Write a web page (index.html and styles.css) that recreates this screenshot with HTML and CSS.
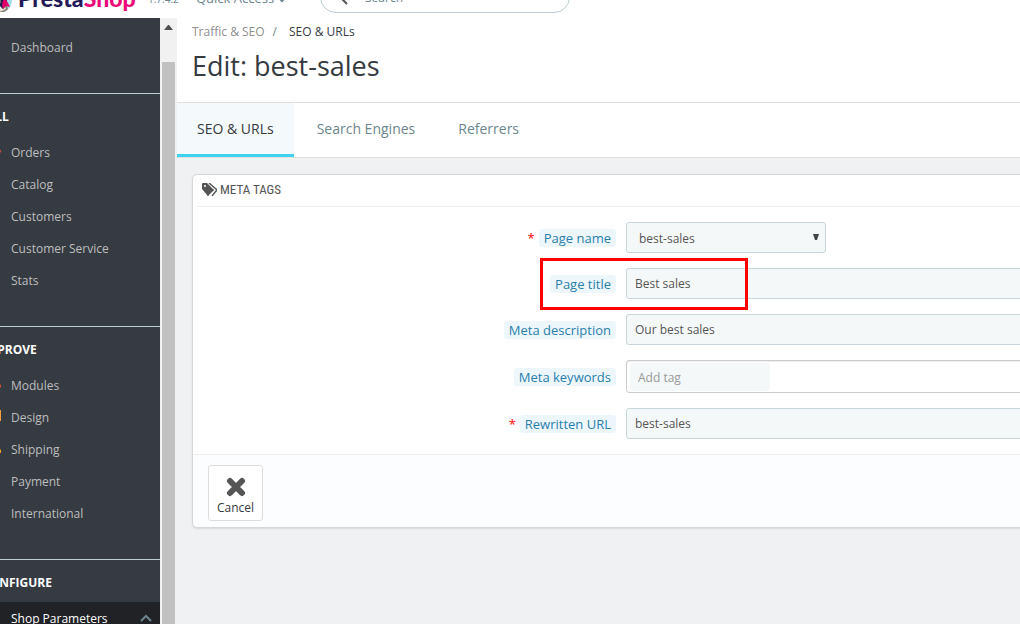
FILE: index.html
```html
<!DOCTYPE html>
<html lang="en">
<head>
    <meta charset="UTF-8">
    <meta name="viewport" content="width=device-width, initial-scale=1.0">
    <title>SEO &amp; URLs - PrestaShop</title>
    <link rel="stylesheet" href="styles.css">
</head>
<body>
    <div class="page">
        <header class="header">
            <a href="#" class="logo">
                <svg class="logo-icon" width="28" height="28" viewBox="0 0 28 28">
                    <circle cx="13" cy="16" r="13" fill="#a4dbe8"/>
                    <path d="M4 24c3-6 6-9 10-9s7 4 8 10c-4 5-13 5-18-1z" fill="#8d8478"/>
                    <path d="M9 25c3-4 7-5 11-1-3 4-8 4-11 1z" fill="#e9e2d6"/>
                    <path d="M14 12l7 3-1 6-3 4-4-4 2-3z" fill="#251b5b"/>
                    <path d="M18 12l4 7 2 4-4-1-3 3-1-4z" fill="#df0067"/>
                </svg>
                <span class="logo-presta">Presta</span><span class="logo-shop">Shop</span>
            </a>
            <span class="version">1.7.4.2</span>
            <button class="quick-access">
                Quick Access
                <svg width="8" height="8" viewBox="0 0 8 8"><path d="M1 3l3 3 3-3" fill="none" stroke="#6c868e" stroke-width="2"/></svg>
            </button>
            <form class="search">
                <svg width="16" height="16" viewBox="0 0 16 16"><circle cx="6" cy="6" r="4" fill="none" stroke="#4e5457" stroke-width="2"/><path d="M8 9l6 6" stroke="#4e5457" stroke-width="2"/></svg>
                <input type="text" placeholder="Search" aria-label="Search">
            </form>
        </header>

        <div class="content">
            <nav class="sidebar">
                <ul class="menu">
                    <li><a href="#"><span class="icon"></span>Dashboard</a></li>
                </ul>

                <h2>SELL</h2>
                <ul class="menu">
                    <li><a href="#"><svg class="icon" viewBox="0 0 16 16"><path d="M0 6h16l-2 8H2zM3 6l3-5h1L5 6zM13 6l-3-5H9l2 5z" fill="#f0532d"/></svg>Orders</a></li>
                    <li><a href="#"><span class="icon"></span>Catalog</a></li>
                    <li><a href="#"><span class="icon"></span>Customers</a></li>
                    <li><a href="#"><span class="icon"></span>Customer Service</a></li>
                    <li><a href="#"><span class="icon"></span>Stats</a></li>
                </ul>

                <h2>IMPROVE</h2>
                <ul class="menu">
                    <li><a href="#"><svg class="icon" viewBox="0 0 16 16"><path d="M1 4h4V3a2 2 0 0 1 4 0v1h4v3h1a2 2 0 0 1 0 4h-1v4H1z" fill="#f0532d"/></svg>Modules</a></li>
                    <li><a href="#"><svg class="icon" viewBox="0 0 16 16"><path d="M1 1h15v11H1zM5 13h6v2H5z" fill="#f39d3e"/></svg>Design</a></li>
                    <li><a href="#"><svg class="icon" viewBox="0 0 16 16"><path d="M0 3h10v3h3l3 3v3H0z" fill="#f39d1e"/></svg>Shipping</a></li>
                    <li><a href="#"><span class="icon"></span>Payment</a></li>
                    <li><a href="#"><span class="icon"></span>International</a></li>
                </ul>

                <h2>CONFIGURE</h2>
                <ul class="menu">
                    <li class="active"><a href="#"><span class="icon"></span>Shop Parameters
                        <svg class="chevron" width="12" height="8" viewBox="0 0 12 8"><path d="M1 7l5-5 5 5" fill="none" stroke="#6c868e" stroke-width="2"/></svg>
                    </a></li>
                </ul>
            </nav>

            <div class="scrollbar">
                <svg width="9" height="5" viewBox="0 0 9 5"><path d="M0 5h9L5 0H4z" fill="#505050"/></svg>
                <div class="thumb"></div>
            </div>

            <main class="main">
                <div class="page-head">
                    <div class="breadcrumb">
                        <a href="#">Traffic &amp; SEO</a>
                        <span class="separator">/</span>
                        <span>SEO &amp; URLs</span>
                    </div>
                    <h1>Edit: best-sales</h1>
                </div>
                <div class="tabs">
                    <a href="#" class="current">SEO &amp; URLs</a>
                    <a href="#">Search Engines</a>
                    <a href="#">Referrers</a>
                </div>

                <form class="panel">
                    <h3>
                        <svg width="15" height="13" viewBox="0 0 15 13">
                            <path d="M0 1a1 1 0 0 1 1-1h4l6 6a1 1 0 0 1 0 2l-4 4a1 1 0 0 1-2 0L0 6zM3 2a1 1 0 1 0 0 2 1 1 0 0 0 0-2z" fill="#555" fill-rule="evenodd"/>
                            <path d="M7 0l7 6a1 1 0 0 1 0 2l-4 5" fill="none" stroke="#555" stroke-width="1.4"/>
                        </svg>
                        META TAGS
                    </h3>
                    <div class="fields">
                        <div class="form-group">
                            <div class="label-col"><span class="required">*</span><label for="page-name">Page name</label></div>
                            <div class="select">
                                <select id="page-name">
                                    <option>best-sales</option>
                                </select>
                                <svg width="6" height="6" viewBox="0 0 6 6"><path d="M0 0h6L4 6H2z" fill="#444"/></svg>
                            </div>
                        </div>
                        <div class="form-group">
                            <div class="label-col"><label for="page-title">Page title</label></div>
                            <input type="text" id="page-title" value="Best sales">
                            <div class="highlight"></div>
                        </div>
                        <div class="form-group">
                            <div class="label-col"><label for="description">Meta description</label></div>
                            <input type="text" id="description" value="Our best sales">
                        </div>
                        <div class="form-group">
                            <div class="label-col"><label for="keywords">Meta keywords</label></div>
                            <div class="tags">
                                <input type="text" id="keywords" placeholder="Add tag">
                            </div>
                        </div>
                        <div class="form-group">
                            <div class="label-col"><span class="required">*</span><label for="url">Rewritten URL</label></div>
                            <input type="text" id="url" value="best-sales">
                        </div>
                    </div>
                    <div class="panel-footer">
                        <button type="button" class="cancel">
                            <svg width="20" height="20" viewBox="0 0 20 20"><path d="M4 4l12 12M16 4L4 16" stroke="#555" stroke-width="6" stroke-linecap="round"/></svg>
                            Cancel
                        </button>
                    </div>
                </form>
            </main>
        </div>
    </div>
</body>
</html>
```
FILE: styles.css
```css
* {
    box-sizing: border-box;
}
body {
    margin: 0;
    overflow: hidden;
    font-family: "Open Sans", sans-serif;
    font-size: 12px;
    color: #363a41;
    background-color: #eff1f2;
}
a {
    text-decoration: none;
}
button,
input,
select {
    font-family: inherit;
    font-size: 12px;
}

/* the window is scrolled: the top and both sides run past its edges */
.page {
    display: flex;
    flex-direction: column;
    height: calc(100vh + 22px);
    margin: -22px -40px 0 -50px;
}

/* Header */
.header {
    display: flex;
    align-items: center;
    flex: none;
    height: 40px;
    padding-left: 36px;
    background: white;
}
.logo {
    display: flex;
    align-items: center;
    width: 150px;
    font-family: Lato, sans-serif;
    font-size: 23px;
    font-weight: 900;
    line-height: 40px;
}
.logo-icon {
    margin-right: 4px;
}
.logo-presta {
    color: #251b5b;
}
.logo-shop {
    color: #ec0a78;
}
.version {
    width: 60px;
    padding: 2px 0 0 12px;
    font-size: 10px;
    color: #6c868e;
}
.quick-access {
    width: 124px;
    padding: 0;
    border: none;
    background: none;
    font-size: 13px;
    text-align: left;
    color: #6c868e;
}
.search {
    display: flex;
    align-items: center;
    width: 250px;
    height: 32px;
    padding: 0 12px;
    margin-bottom: 2px;
    border: 1px solid #bbcdd2;
    border-radius: 16px;
}
.search input {
    width: 180px;
    padding: 0 16px;
    border: none;
    background: none;
}
.search input::placeholder {
    color: #6c868e;
}

.content {
    display: flex;
    flex: 1;
    min-height: 0;
}

/* Sidebar */
.sidebar {
    flex: none;
    width: 210px;
    padding-top: 13px;
    overflow: hidden;
    background-color: #363a41;
}
.sidebar h2 {
    height: 43px;
    margin: 30px 0 0;
    padding-left: 32px;
    border-top: 1px solid #bbcdd2;
    font-size: 12px;
    font-weight: 700;
    line-height: 45px;
    color: white;
}
.menu {
    list-style: none;
    margin: 0;
    padding: 0;
}
.menu a {
    display: flex;
    align-items: center;
    height: 32px;
    padding: 0 8px 0 35px;
    font-size: 12px;
    color: #bebebe;
}
.menu .icon {
    width: 16px;
    height: 16px;
    margin-right: 10px;
}
.menu .active a {
    background-color: #202226;
    color: white;
}
.chevron {
    margin-left: auto;
}

.scrollbar {
    display: flex;
    flex: none;
    flex-direction: column;
    align-items: center;
    width: 17px;
    padding-top: 7px;
    background-color: #f1f1f1;
}
.thumb {
    flex: 1;
    width: 13px;
    margin-top: 32px;
    background-color: #c1c1c1;
}

/* Main */
.main {
    flex: 1;
    min-width: 0;
}
.page-head {
    height: 85px;
    padding: 5px 15px 0;
    border-bottom: 1px solid #dfdfdf;
    background: white;
}
.breadcrumb {
    display: flex;
    gap: 8px;
    line-height: 18px;
}
.breadcrumb a {
    color: #8f8f8f;
}
.separator {
    padding-right: 4px;
    color: #6c868e;
}
h1 {
    margin: 7px 0 0;
    font-size: 27px;
    font-weight: 400;
    line-height: 36px;
}
.tabs {
    display: flex;
    gap: 3px;
    height: 55px;
    border-bottom: 1px solid #dfdfdf;
    background: white;
}
.tabs a {
    padding: 0 20px;
    border-bottom: 3px solid transparent;
    font-size: 14px;
    line-height: 52px;
    color: #6c868e;
}
.tabs .current {
    border-bottom-color: #3ed2f0;
    background-color: #f4f9fb;
    color: #363a41;
}

.panel {
    margin: 16px 15px 0;
    border: 1px solid #d3d8db;
    border-radius: 5px;
    background: white;
    box-shadow: 0 1px 2px rgba(0,0,0,0.1);
}
.panel h3 {
    display: flex;
    align-items: center;
    gap: 3px;
    height: 32px;
    margin: 0 4px;
    padding: 0 0 2px 5px;
    border-bottom: 1px solid #eee;
    font-family: "Ubuntu Condensed", "Liberation Sans Narrow", "Roboto Condensed", sans-serif;
    font-size: 13px;
    font-weight: 400;
    color: #555;
}
.fields {
    display: flex;
    flex-direction: column;
    gap: 15px;
    padding: 15px;
}
.form-group {
    position: relative;
    display: flex;
    align-items: center;
    gap: 10px;
}
.label-col {
    display: flex;
    justify-content: flex-end;
    flex: none;
    gap: 4px;
    width: 408px;
    font-size: 13px;
    line-height: 18px;
}
.label-col label {
    padding: 0 5px;
    border-radius: 3px;
    background-color: #edf7fb;
    color: #2a7fac;
}
.required {
    color: red;
}
.form-group > input,
.select select {
    height: 31px;
    padding: 0 8px;
    border: 1px solid #c7d6db;
    border-radius: 3px;
    background-color: #f5f8f9;
    color: #555;
}
.form-group > input {
    flex: 1;
    min-width: 0;
}
.select {
    position: relative;
    width: 200px;
}
.select select {
    width: 100%;
    padding: 2px 12px 0;
    appearance: none;
}
.select svg {
    position: absolute;
    top: 12px;
    right: 7px;
}
.tags {
    flex: 1;
    height: 33px;
    padding: 2px 3px;
    border: 1px solid #ccc;
    border-radius: 3px;
    box-shadow: inset 0 1px 1px rgba(0,0,0,0.07);
}
.tags input {
    width: 140px;
    height: 28px;
    padding: 0 8px;
    border: none;
    border-radius: 3px;
    background-color: #f5f8f9;
}
.tags input::placeholder {
    color: #999;
}
.highlight {
    position: absolute;
    top: -10px;
    left: 332px;
    width: 208px;
    height: 52px;
    border: 3px solid #f00;
}
.panel-footer {
    padding: 10px 15px 6px;
    border-top: 1px solid #eee;
    border-radius: 0 0 5px 5px;
    background-color: #fcfdfe;
}
.cancel {
    display: flex;
    flex-direction: column;
    align-items: center;
    width: 55px;
    height: 56px;
    padding: 11px 0 0;
    border: 1px solid #ddd;
    border-radius: 3px;
    background: white;
    line-height: 22px;
    color: #363a41;
}
```
